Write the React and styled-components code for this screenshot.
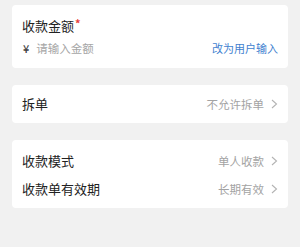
import React from 'react';
import styled, { createGlobalStyle } from 'styled-components';

const GlobalStyle = createGlobalStyle`
  html, body {
    margin: 0;
    padding: 0;
    background: #f1f1f1;
  }
  body {
    font-family: "Noto Sans CJK SC", "Noto Sans", sans-serif;
    -webkit-font-smoothing: antialiased;
  }
`;

const Page = styled.div`
  width: 300px;
  height: 247px;
  padding: 5px 12px 0 12px;
  box-sizing: border-box;
  display: flex;
  flex-direction: column;
  gap: 17px;
  background: #f1f1f1;
`;

const Card = styled.div`
  background: #fff;
  border-radius: 4px;
  padding: ${props => props.$pad || '0 10px'};
  display: flex;
  flex-direction: column;
`;

const Label = styled.div`
  font-size: 13px;
  line-height: ${props => props.$lh || '18px'};
  color: #222;
`;

const Star = styled.span`
  color: #e8413b;
  font-size: 11px;
  font-weight: 700;
  vertical-align: top;
  line-height: 12px;
  margin-left: 1px;
`;

const InputRow = styled.div`
  margin-top: 4px;
  height: 18px;
  display: flex;
  align-items: center;
  justify-content: space-between;
`;

const Amount = styled.div`
  display: flex;
  align-items: center;
  font-size: 11.5px;
  color: #a6a6a6;
`;

const Yen = styled.span`
  color: #444;
  font-size: 11px;
  font-weight: 500;
  margin-left: 1px;
  margin-right: 7px;
`;

const LinkText = styled.span`
  font-size: 11px;
  color: #3f7fcf;
`;

const Row = styled.div`
  height: ${props => props.$h || '28px'};
  display: flex;
  align-items: center;
  justify-content: space-between;
`;

const Value = styled.div`
  display: flex;
  align-items: center;
  gap: 7px;
  font-size: 11.5px;
  color: #a3a3a3;
`;

const Chevron = () => (
  <svg width="7" height="10" viewBox="0 0 7 10">
    <polyline points="1,1 5.5,5 1,9" fill="none" stroke="#b3b3b3" strokeWidth="1.1" />
  </svg>
);

const SettingRow = ({ label, value, height }) => (
  <Row $h={height}>
    <Label>{label}</Label>
    <Value>
      {value}
      <Chevron />
    </Value>
  </Row>
);

export default function App() {
  return (
    <>
      <GlobalStyle />
      <Page>
        <Card $pad="12px 10px 11px">
          <Label>
            收款金额<Star>*</Star>
          </Label>
          <InputRow>
            <Amount>
              <Yen>¥</Yen>
              请输入金额
            </Amount>
            <LinkText>改为用户输入</LinkText>
          </InputRow>
        </Card>
        <Card>
          <SettingRow label="拆单" value="不允许拆单" height="38px" />
        </Card>
        <Card $pad="7px 10px 5px">
          <SettingRow label="收款模式" value="单人收款" />
          <SettingRow label="收款单有效期" value="长期有效" />
        </Card>
      </Page>
    </>
  );
}
